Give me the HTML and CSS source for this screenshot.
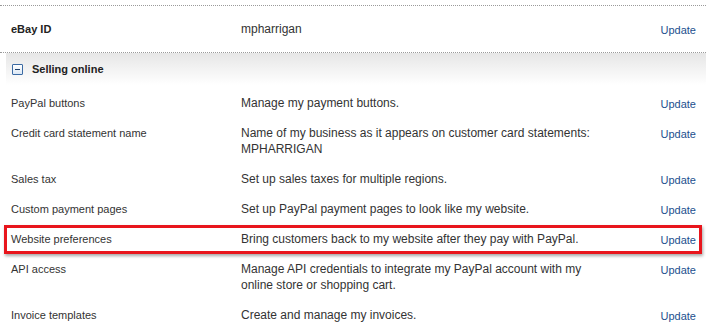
FILE: index.html
```html
<!DOCTYPE html>
<html>
<head>
<meta charset="utf-8">
<link rel="stylesheet" href="styles.css">
</head>
<body>
<div class="page">
  <div class="row ebay">
    <div class="label bold">eBay ID</div>
    <div class="desc">mpharrigan</div>
    <a class="update" href="#">Update</a>
  </div>
  <div class="section-head">
    <span class="toggle"><span class="minus"></span></span>
    <span class="section-title">Selling online</span>
  </div>
  <div class="row">
    <div class="label">PayPal buttons</div>
    <div class="desc">Manage my payment buttons.</div>
    <a class="update" href="#">Update</a>
  </div>
  <div class="row">
    <div class="label">Credit card statement name</div>
    <div class="desc">Name of my business as it appears on customer card statements:<br>MPHARRIGAN</div>
    <a class="update" href="#">Update</a>
  </div>
  <div class="row">
    <div class="label">Sales tax</div>
    <div class="desc">Set up sales taxes for multiple regions.</div>
    <a class="update" href="#">Update</a>
  </div>
  <div class="row">
    <div class="label">Custom payment pages</div>
    <div class="desc">Set up PayPal payment pages to look like my website.</div>
    <a class="update" href="#">Update</a>
  </div>
  <div class="row highlight">
    <div class="label">Website preferences</div>
    <div class="desc">Bring customers back to my website after they pay with PayPal.</div>
    <a class="update" href="#">Update</a>
  </div>
  <div class="row">
    <div class="label">API access</div>
    <div class="desc">Manage API credentials to integrate my PayPal account with my<br>online store or shopping cart.</div>
    <a class="update" href="#">Update</a>
  </div>
  <div class="row">
    <div class="label">Invoice templates</div>
    <div class="desc">Create and manage my invoices.</div>
    <a class="update" href="#">Update</a>
  </div>
</div>
</body>
</html>
```

FILE: styles.css
```css
html, body {
  margin: 0;
  padding: 0;
  background: #fff;
}
body {
  font-family: "Liberation Sans", Arial, sans-serif;
  color: #333;
  overflow: hidden;
}
.page {
  width: 706px;
  padding-top: 5px;
}
.row {
  position: relative;
  display: grid;
  grid-template-columns: 241px 1fr 60px;
  align-items: start;
  padding: 7px 10px 7px 0;
  line-height: 16px;
}
.label {
  padding-left: 11px;
  font-size: 11px;
  color: #333;
}
.label.bold {
  font-weight: bold;
  color: #222;
}
.desc {
  font-size: 12px;
  color: #333;
}
.update {
  justify-self: end;
  font-size: 11px;
  line-height: 14px;
  margin-top: 2px;
  color: #1d4f8e;
  text-decoration: none;
}
.row.ebay {
  border-top: 1px dotted #9a9a9a;
  border-bottom: 1px dotted #9a9a9a;
  padding-top: 15px;
  padding-bottom: 15px;
}
.ebay .desc {
  font-size: 12px;
}
.section-head {
  display: flex;
  align-items: center;
  gap: 9px;
  height: 32px;
  margin: 0 0 3px 6px;
  padding-left: 6px;
  background: linear-gradient(to bottom, #e6e6e6 0%, #f4f4f4 55%, #ffffff 100%);
}
.toggle {
  display: flex;
  align-items: center;
  justify-content: center;
  width: 9px;
  height: 9px;
  border: 1px solid #3b6aa3;
  border-radius: 1px;
  background: linear-gradient(to bottom, #ffffff 0%, #dce8f5 100%);
}
.minus {
  width: 5px;
  height: 1px;
  background: #1f3f6a;
}
.section-title {
  font-size: 11px;
  font-weight: bold;
  color: #222;
}
.row.highlight::after {
  content: "";
  position: absolute;
  top: 1px;
  bottom: 0;
  left: 4px;
  right: 4px;
  border: 3px solid #e8151c;
  box-shadow: 1px 2px 3px rgba(0, 0, 0, 0.35);
  pointer-events: none;
}
```
